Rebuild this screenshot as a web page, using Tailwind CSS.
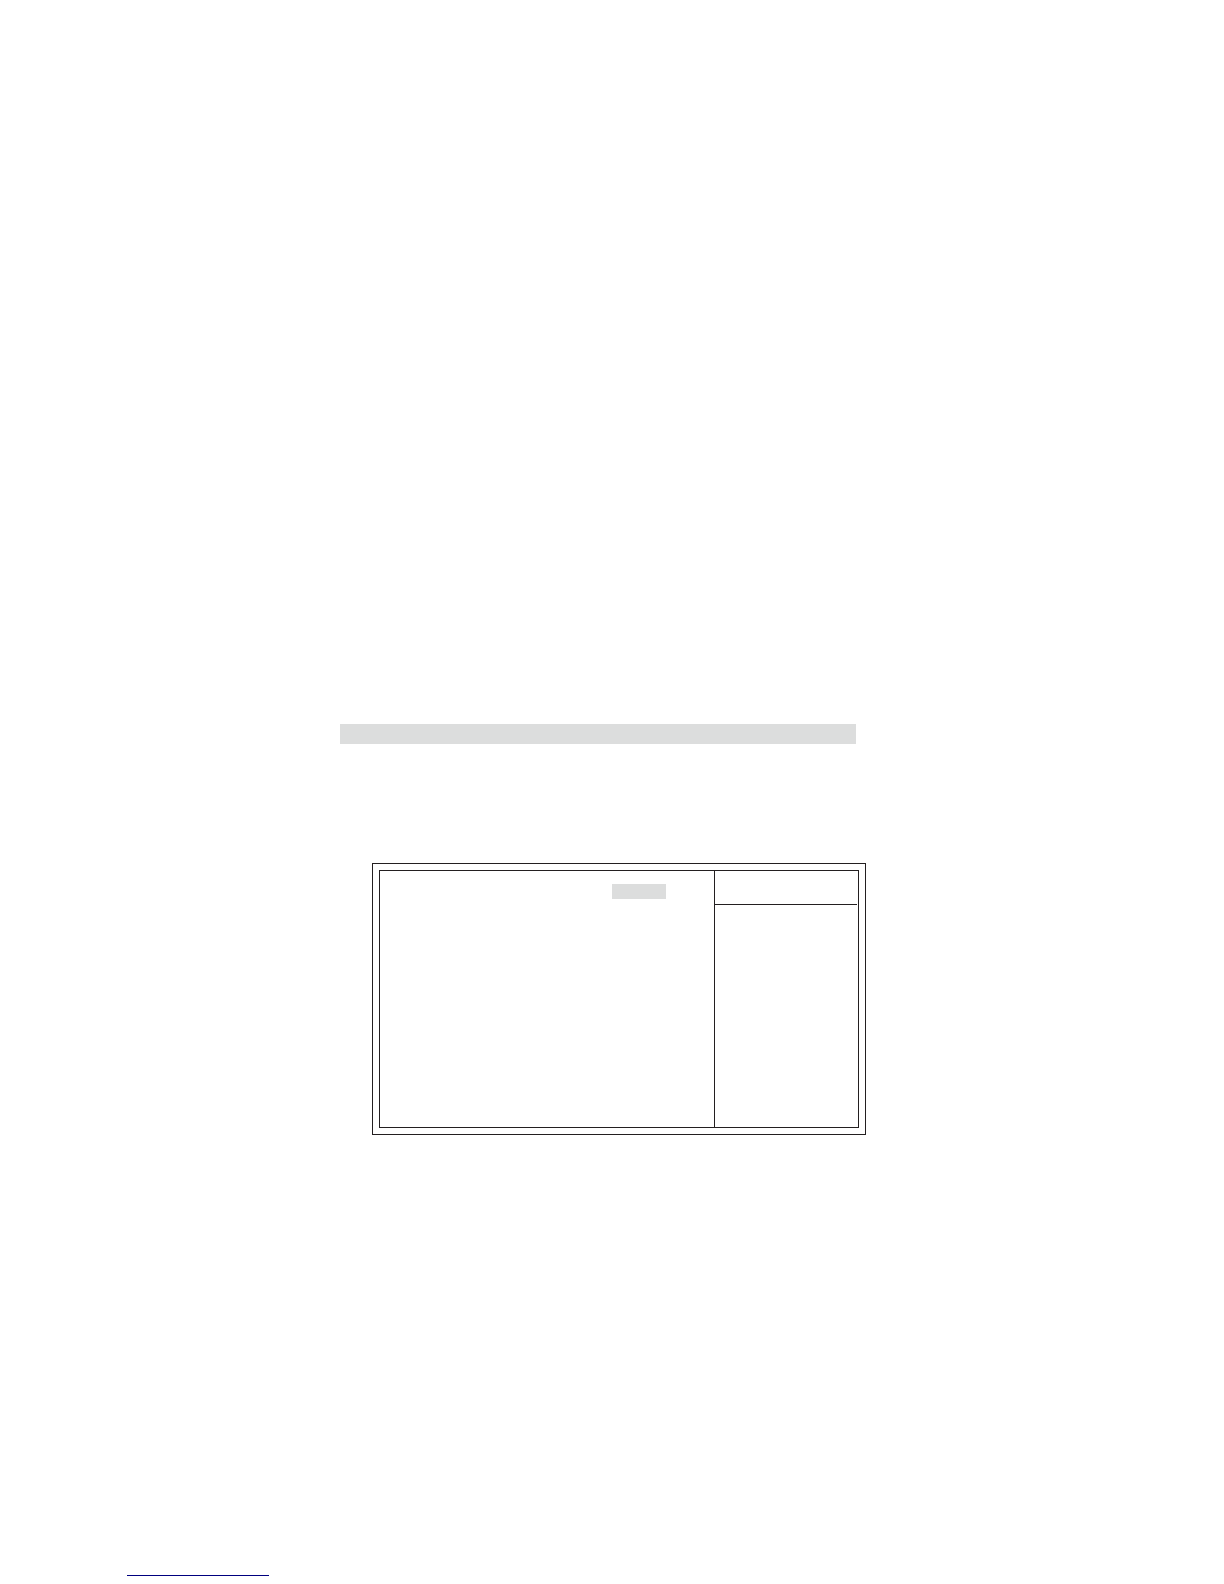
<!DOCTYPE html>
<html lang="en">
<head>
<meta charset="utf-8">
<meta name="viewport" content="width=device-width, initial-scale=1">
<title>Setup screen</title>
<script src="https://cdn.jsdelivr.net/npm/@tailwindcss/browser@4"></script>
</head>
<body class="bg-white">
<main class="flex min-h-screen flex-col pt-[724px] pb-2">
  <!-- Heading band -->
  <div class="ml-[340px] h-5 w-full max-w-[516px] bg-[#dcdddd]"></div>

  <!-- Double-framed setup panel -->
  <section class="mt-[119px] ml-[372px] w-full max-w-[494px] border border-[#231f20] p-1.5">
    <div class="flex min-h-[258px] border border-[#231f20]">
      <div class="flex-1 pt-[13px] pl-[232px]">
        <div class="h-[15px] w-[54px] bg-[#dcdddd]"></div>
      </div>
      <aside class="w-36 border-l border-[#231f20]">
        <div class="mr-px h-[34px] border-b border-[#231f20]"></div>
      </aside>
    </div>
  </section>

  <!-- Footer rule -->
  <hr class="mt-auto ml-[127px] w-[142px] border-t border-[#00007f]">
</main>
</body>
</html>
